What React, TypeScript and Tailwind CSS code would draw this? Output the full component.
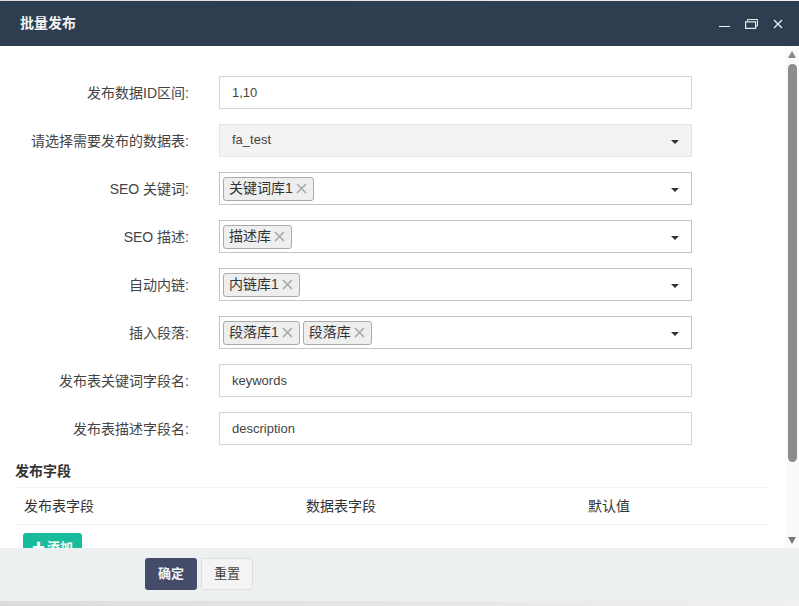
const font = { fontFamily: '"Liberation Sans", "Noto Sans CJK SC", sans-serif' };

function Caret() {
  return <span className="ml-auto mr-[12px] mt-[2px] h-0 w-0 border-x-[4px] border-t-[4px] border-x-transparent border-t-[#333]" />;
}

function Tag({ text }: { text: string }) {
  return (
    <span className="flex h-[24px] items-center rounded-[3px] border border-[#aaa] bg-[#eee] pl-[5px] pr-[6px] text-[14px] text-[#333]">
      {text}
      <svg width="11" height="11" viewBox="0 0 11 11" className="ml-[3px]" stroke="#a8a8a8" strokeWidth="1.6" fill="none">
        <path d="M1 1l9 9M10 1l-9 9" />
      </svg>
    </span>
  );
}

function Row({ label, children }: { label: string; children: React.ReactNode }) {
  return (
    <div className="flex h-[33px] items-center">
      <label className="w-[189px] pt-[2px] text-right text-[14px] text-[#444]">{label}</label>
      <div className="ml-[30px] w-[473px]">{children}</div>
    </div>
  );
}

function TextBox({ value }: { value: string }) {
  return (
    <div className="flex h-[33px] items-center border border-[#d2d6de] bg-white px-[12px] text-[13px] text-[#444]">
      <span>{value}</span>
    </div>
  );
}

function MultiSelect({ tags }: { tags: string[] }) {
  return (
    <div className="flex h-[33px] items-center gap-[3px] border border-[#c4c4c4] bg-white pl-[3px]">
      {tags.map((t) => (
        <Tag key={t} text={t} />
      ))}
      <Caret />
    </div>
  );
}

export default function App() {
  return (
    <div className="flex h-[606px] w-[799px] flex-col overflow-hidden bg-gradient-to-r from-[#dcdcdc] to-[#f0f0f0]" style={font}>
      <div className="mt-[1px] flex h-[45px] shrink-0 items-center bg-[#2c3e50] pl-[20px] pr-[16px] text-white">
        <span className="text-[14px] font-bold text-[#f4f4f4]">批量发布</span>
        <div className="ml-auto flex items-center gap-[15px]">
          <svg width="11" height="12" viewBox="0 0 11 12" fill="none" stroke="#f0f0f0" strokeWidth="1">
            <path d="M0 8.5h11" />
          </svg>
          <svg width="13" height="10" viewBox="0 0 13 10" fill="none" stroke="#e8e8e8" strokeWidth="1">
            <path d="M0.6 2.8h10v6.6h-10z" strokeWidth="1.2" />
            <path d="M2.5 2.5V0.5h10v6.5h-2" />
          </svg>
          <svg width="10" height="10" viewBox="0 0 10 10" fill="none" stroke="#f0f0f0" strokeWidth="1.2">
            <path d="M1 1l8 8M9 1l-8 8" />
          </svg>
        </div>
      </div>

      <div className="flex h-[502px] shrink-0 bg-white">
        <div className="min-w-0 flex-1 overflow-hidden pt-[30px] pr-[15px]">
          <div className="flex flex-col gap-[15px]">
            <Row label="发布数据ID区间:">
              <TextBox value="1,10" />
            </Row>
            <Row label="请选择需要发布的数据表:">
              <div className="flex h-[33px] items-center border border-[#e4e4e4] bg-[#f3f3f3] pl-[12px] text-[13px] text-[#444]">
                <span className="-mt-[1px]">fa_test</span>
                <Caret />
              </div>
            </Row>
            <Row label="SEO 关键词:">
              <MultiSelect tags={["关键词库1"]} />
            </Row>
            <Row label="SEO 描述:">
              <MultiSelect tags={["描述库"]} />
            </Row>
            <Row label="自动内链:">
              <MultiSelect tags={["内链库1"]} />
            </Row>
            <Row label="插入段落:">
              <MultiSelect tags={["段落库1", "段落库"]} />
            </Row>
            <Row label="发布表关键词字段名:">
              <TextBox value="keywords" />
            </Row>
            <Row label="发布表描述字段名:">
              <TextBox value="description" />
            </Row>
          </div>

          <div className="ml-[15px] mt-[16px]">
            <div className="flex h-[27px] items-center border-b border-[#f4f4f4] pb-[6px] text-[14px] font-bold text-[#333]">发布字段</div>
            <div className="flex h-[37px] items-center border-b border-[#f0f0f0] pl-[9px] text-[14px] text-[#333]">
              <span className="w-[282px]">发布表字段</span>
              <span className="w-[282px]">数据表字段</span>
              <span>默认值</span>
            </div>
            <button className="ml-[8px] mt-[8px] flex h-[30px] w-[59px] items-start justify-center rounded-[3px] bg-[#18bc9c] pt-[5px] text-[13px] font-bold text-white">
              <span className="mr-[2px]">✚</span>添加
            </button>
          </div>
        </div>

        <div className="flex w-[14px] shrink-0 flex-col items-start bg-[#fafafa] pl-[3px] pt-[5px] pb-[4px]">
          <span className="h-0 w-0 border-x-[4.5px] border-b-[7px] border-x-transparent border-b-[#888]" />
          <span className="mt-[6px] h-[398px] w-[9px] rounded-[5px] bg-[#8c8c8c]" />
          <span className="mt-auto h-0 w-0 border-x-[4.5px] border-t-[7px] border-x-transparent border-t-[#777]" />
        </div>
      </div>

      <div className="flex h-[53px] shrink-0 items-start gap-[4px] bg-[#ecf0f1] pl-[145px] pt-[10px]">
        <button className="h-[32px] w-[52px] rounded-[3px] bg-[#444c69] text-[13px] font-bold text-[#f4f4f4]">确定</button>
        <button className="h-[32px] w-[52px] rounded-[3px] border border-[#ddd] bg-[#f4f4f4] text-[13px] text-[#444]">重置</button>
      </div>
    </div>
  );
}
